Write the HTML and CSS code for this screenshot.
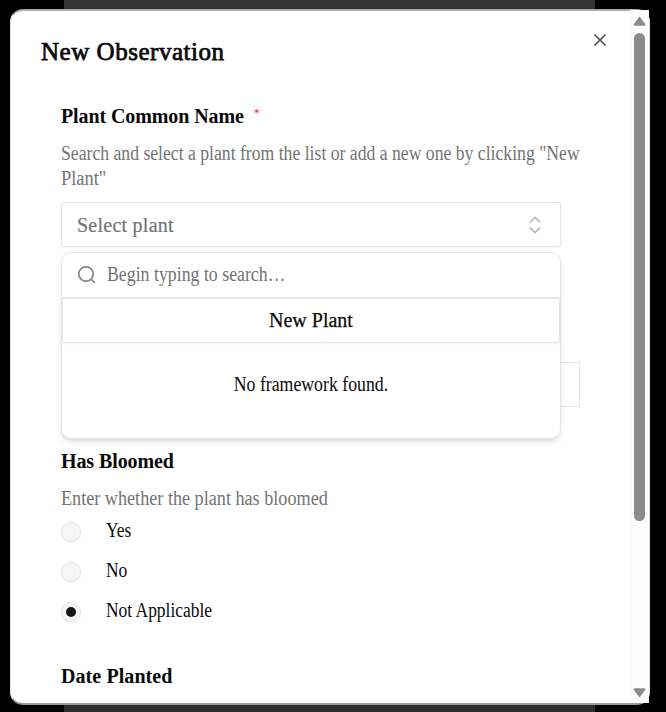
FILE: index.html
```html
<!DOCTYPE html>
<html lang="en">
<head>
<meta charset="utf-8">
<title>New Observation</title>
<link rel="stylesheet" href="styles.css">
</head>
<body>
<div class="backdrop">
  <div class="page-column"></div>
</div>
<main class="dialog">
  <div class="content">
    <header class="dialog-header">
      <h1 class="title">New Observation</h1>
      <button class="close" aria-label="Close"><svg width="20" height="20" viewBox="0 0 20 20"><path d="M4.500 4.500 15.500 15.500M15.500 4.500 4.500 15.500"/></svg></button>
    </header>
    <form class="form">
      <section class="field plant-field">
        <h2 class="label"><span class="label-plant">Plant Common Name</span><span class="required">*</span></h2>
        <p class="description"><span class="desc-long">Search and select a plant from the list or add a new one by clicking "New</span><br><span class="desc-short">Plant"</span></p>
        <div class="combobox">
          <button type="button" class="select"><span>Select plant</span><svg width="20" height="20" viewBox="0 0 20 20"><path d="m5 7.500 5-5 5 5M5 12.500l5 5 5-5"/></svg></button>
          <div class="popover">
            <div class="search"><svg width="20" height="20" viewBox="0 0 20 20"><circle cx="9" cy="9" r="7.200"/><path d="m14.300 14.300 3.700 3.700"/></svg><span class="search-text">Begin typing to search…</span></div>
            <button type="button" class="new-plant"><span>New Plant</span></button>
            <p class="empty"><span>No framework found.</span></p>
          </div>
        </div>
      </section>
      <div class="text-input"></div>
      <section class="field">
        <h2 class="label"><span class="label-bloomed">Has Bloomed</span></h2>
        <p class="description"><span class="desc-bloomed">Enter whether the plant has bloomed</span></p>
        <div class="radios">
          <label class="option"><span class="radio"></span><span class="option-text">Yes</span></label>
          <label class="option"><span class="radio"></span><span class="option-text">No</span></label>
          <label class="option"><span class="radio checked"></span><span class="option-text">Not Applicable</span></label>
        </div>
      </section>
      <section class="field date-field">
        <h2 class="label"><span class="label-date">Date Planted</span></h2>
      </section>
    </form>
  </div>
</main>
<div class="scrollbar">
  <svg width="13" height="10" viewBox="0 0 13 10"><path d="M6.500 .5 12.500 8.500Q12.500 9.800 11 9.800H2Q.5 9.800.5 8.500Z"/></svg>
  <div class="track"><div class="thumb"></div></div>
  <svg width="13" height="10" viewBox="0 0 13 10"><path d="M6.500 9.500 12.500 1.500Q12.500.2 11 .2H2Q.5.2.5 1.500Z"/></svg>
</div>
</body>
</html>
```

FILE: styles.css
```css
* { box-sizing: border-box; }
html, body { margin: 0; height: 100%; }
body {
  overflow: hidden;
  padding: 9px 16px 7px 10px;
  background: #000;
  color: #0a0a0a;
  font-family: "Liberation Serif", serif;
  font-size: 20px;
}
h1, h2, p { margin: 0; }
button { font: inherit; color: inherit; margin: 0; padding: 0; }
svg { fill: none; stroke: currentColor; flex: none; }
.backdrop { position: absolute; inset: 0; padding: 0 71px 0 64px; }
.page-column { height: 100%; background: linear-gradient(#333 50%, #2c2c2c 50%); }
.dialog {
  position: relative;
  height: 696px;
  border: 1px solid #e5e5e5;
  border-top: 2px solid #aaa;
  border-bottom: 2px solid #999;
  border-radius: 13px;
  background: #fff;
  overflow: hidden;
}
.content { padding: 0 69px 0 50px; }
.dialog-header { display: flex; height: 93px; padding-top: 25px; margin-left: -20px; justify-content: space-between; }
.title { font-size: 25px; line-height: 32px; font-weight: 400; -webkit-text-stroke: .75px; letter-spacing: .53px; white-space: nowrap; }
.close { width: 20px; height: 20px; margin: -6px -30px 0 0; border: 0; background: none; color: #4d4d4d; }
.close svg { display: block; stroke-width: 1.600; }
.label { height: 25px; display: flex; font-size: 20px; line-height: 25px; white-space: nowrap; letter-spacing: -.1px; }
.label-date { letter-spacing: .08px; }
.required { margin-left: 10px; font-size: 12px; line-height: 18px; font-weight: 400; color: #ef2b2d; }
.description { margin-top: 12px; color: #737373; line-height: 25px; white-space: nowrap; }
.description span, .search-text, .empty span, .option-text { display: inline-block; transform-origin: left center; }
.desc-long { transform: scaleX(.883); }
.desc-short { transform: scaleX(.92); }
.desc-bloomed { transform: scaleX(.908); }
.combobox { position: relative; width: 500px; margin-top: 11px; }
.select {
  display: flex; align-items: center; justify-content: space-between;
  width: 100%; height: 45px; padding: 0 15px;
  border: 1px solid #e5e5e5; border-radius: 2px; background: #fff;
  box-shadow: 0 1px 2px #0000000d; color: #737373;
  letter-spacing: .25px; -webkit-text-stroke: .2px;
}
.select span { padding-top: 2px; }
.select svg { stroke: #b5b5b5; stroke-width: 1.700; }
.popover {
  position: absolute; z-index: 2; top: 50px; left: 0;
  width: 500px; height: 187px;
  border: 1px solid #e5e5e5; border-radius: 10px; background: #fff;
  box-shadow: 0 4px 6px -1px #0000001a, 0 2px 4px -2px #0000001a;
}
.search { display: flex; height: 45px; align-items: center; gap: 10px; padding: 0 15px; border-bottom: 1px solid #e5e5e5; color: #737373; }
.search svg { stroke: #858585; stroke-width: 1.700; }
.search-text { padding-bottom: 2px; transform: scaleX(.89); }
.new-plant { display: block; width: 100%; height: 45px; border: 1px solid #e5e5e5; border-radius: 2px; background: #fff; box-shadow: 0 1px 2px #0000000d; text-align: center; -webkit-text-stroke: .25px; }
.empty { padding-top: 29px; line-height: 25px; text-align: center; }
.empty span { transform-origin: center; transform: scaleX(.888); }
.text-input { width: 519px; height: 45px; margin-top: 115px; margin-bottom: 42px; border: 1px solid #e5e5e5; background: #fff; }
.radios { display: grid; gap: 20px; margin-top: 11px; }
.option { display: flex; height: 20px; align-items: center; gap: 25px; white-space: nowrap; }
.option-text { padding-bottom: 4px; transform: scaleX(.872); }
.radio { display: grid; place-items: center; width: 20px; height: 20px; border: 1px solid #e5e5e5; border-radius: 50%; background: #f6f6f6; box-shadow: 0 1px 2px #0000000d; }
.checked::after { content: ""; width: 10px; height: 10px; border-radius: 50%; background: #171717; }
.date-field { margin-top: 42px; }
.scrollbar {
  position: absolute; top: 10px; left: 630px; z-index: 3;
  display: flex; flex-direction: column; align-items: center; gap: 7px;
  width: 19px; height: 693px; padding: 6px 0 5px; background: #fcfcfc;
}
.scrollbar svg { fill: #8b8b8b; stroke: none; }
.track { flex: 1; width: 11px; }
.thumb { width: 11px; height: 488px; border-radius: 6px; background: #8b8b8b; }
```
